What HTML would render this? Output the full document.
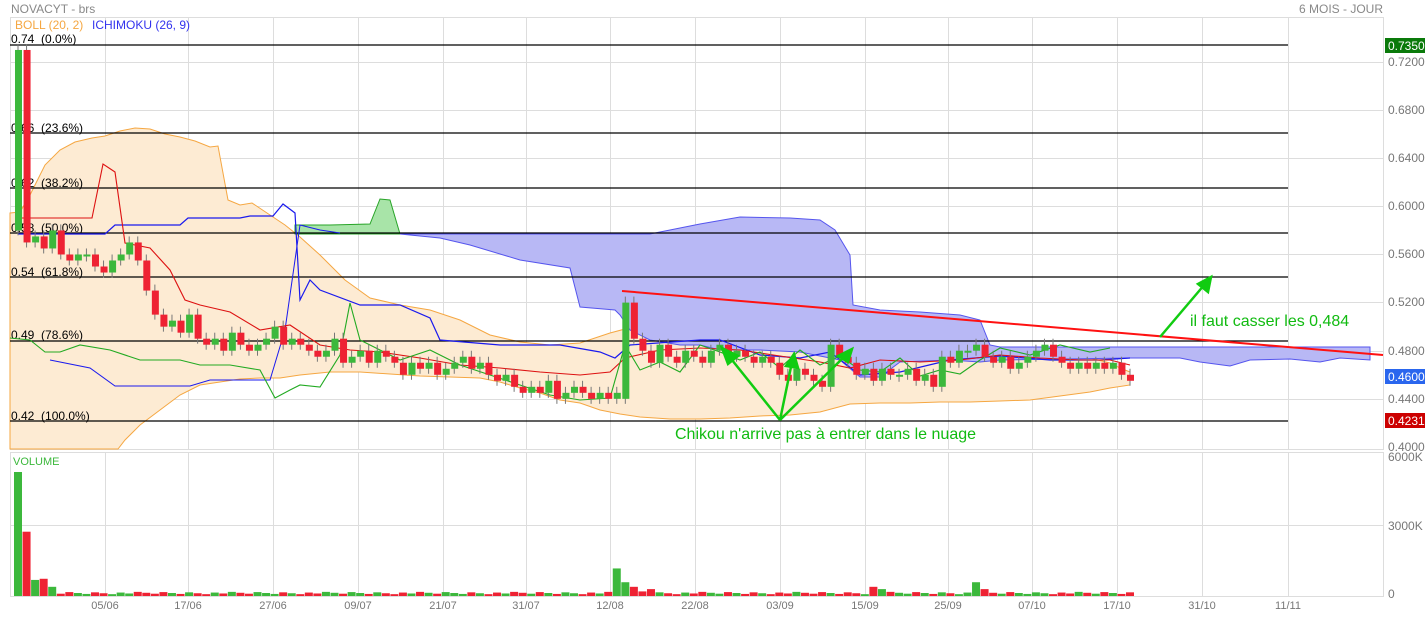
<!DOCTYPE html><html><head><meta charset="utf-8"><style>
body{margin:0;background:#fff;width:1428px;height:616px;overflow:hidden;font-family:"Liberation Sans",sans-serif}
svg text{font-family:"Liberation Sans",sans-serif;white-space:pre}
</style></head><body>
<svg id="s" width="1428" height="616" xmlns="http://www.w3.org/2000/svg">
<rect width="1428" height="616" fill="#fff"/>
<g id="grid" stroke="#ddd" stroke-width="1"></g>
<rect x="10.5" y="17.5" width="1373" height="432" fill="none" stroke="#ddd"/>
<rect x="10.5" y="452.5" width="1373" height="144" fill="none" stroke="#ddd"/>
<polygon fill="#fdebd3" stroke="#f5a742" stroke-width="1" points="10,213 20,212 30,195 45,165 60,150 75,142 92,138 105,136 120,131 135,128 150,129 165,134 180,137 195,141 210,147 218,146 228,200 240,205 252,203 270,215 285,225 300,237 320,255 345,280 370,298 400,305 430,310 460,320 490,335 520,342 550,345 580,343 610,333 640,325 670,322 700,320 740,320 780,321 820,322 850,326 880,330 910,340 940,342 970,346 1000,348 1030,352 1060,355 1090,358 1110,363 1120,368 1130,372 1130,385 1110,388 1090,392 1060,396 1030,400 1000,401 970,402 940,402 910,403 880,403 850,404 820,412 790,415 760,416 730,418 700,419 670,419 640,417 620,414 600,410 580,403 560,400 540,393 520,388 500,382 480,378 450,377 420,376 390,374 360,372 330,372 300,375 280,378 260,378 240,379 220,382 200,385 180,395 160,410 140,425 125,440 118,449 10,449"/>
<polygon fill="#a8e4a8" stroke="#28a428" points="295,225 330,225 370,224 380,199 390,200 400,234 295,234"/>
<polygon fill="#b8b8f5" stroke="#5555ee" stroke-width="1" points="400,234 650,234 700,224 740,217 790,218 820,220 835,230 850,255 853,305 880,310 920,312 960,315 980,320 990,345 1000,347 1120,347 1370,347 1370,360 1340,358 1320,362 1290,359 1250,360 1230,366 1200,362 1180,358 1130,358 1000,360 980,362 950,360 900,362 880,377 860,377 840,360 800,352 760,350 720,350 700,345 680,345 650,340 630,330 620,315 615,310 580,307 570,268 520,260 470,245 440,238 420,236 400,234"/>
<g stroke="#000" stroke-width="1.2">
<line x1="10" y1="45" x2="1288" y2="45"/><line x1="10" y1="133" x2="1288" y2="133"/><line x1="10" y1="188" x2="1288" y2="188"/><line x1="10" y1="233" x2="1288" y2="233"/><line x1="10" y1="277" x2="1288" y2="277"/><line x1="10" y1="341" x2="1288" y2="341"/><line x1="10" y1="421" x2="1288" y2="421"/>
</g>
<g font-size="12" fill="#000">
<text x="11" y="43">0.74  (0.0%)</text><text x="11" y="132">0.66  (23.6%)</text><text x="11" y="187">0.62  (38.2%)</text><text x="11" y="232">0.58  (50.0%)</text><text x="11" y="276">0.54  (61.8%)</text><text x="11" y="339">0.49  (78.6%)</text><text x="11" y="420">0.42  (100.0%)</text>
</g>
<polyline fill="none" stroke="#1a1aee" stroke-width="1.2" points="18,234 105,234 115,225 180,225 188,218 240,218 250,216 273,216 283,204 295,213 300,300 310,280 320,290 360,305 400,305 430,318 440,340 500,345 560,345 600,352 615,358 630,345 700,340 720,340 760,355 800,358 830,352 860,375 900,372 950,360 1000,356 1050,360 1100,360 1130,358"/>
<polyline fill="none" stroke="#1a1aee" stroke-width="1" points="50,360 90,368 115,386 190,386 210,380 270,380 285,330 300,225 320,230 340,233"/>
<polyline fill="none" stroke="#dd1111" stroke-width="1.1" points="18,218 92,218 103,164 115,172 125,243 135,245 150,248 170,270 185,300 200,305 230,312 260,330 290,325 320,345 350,350 380,352 420,358 460,365 500,368 540,372 580,375 610,372 625,358 660,350 700,348 740,350 780,356 820,362 850,368 880,360 920,362 960,360 1000,355 1040,358 1080,360 1110,360 1130,365"/>
<polyline fill="none" stroke="#22aa22" stroke-width="1.1" points="10,338 30,340 45,352 60,352 80,345 110,350 140,360 180,360 200,365 230,365 260,370 275,398 290,390 300,385 320,387 340,355 350,303 360,340 380,350 400,360 430,350 460,365 490,375 520,385 550,395 580,400 610,398 625,345 640,370 660,362 680,372 700,345 720,352 740,360 760,352 780,368 800,350 820,365 840,356 860,370 880,372 900,358 920,376 940,370 960,374 980,360 1000,348 1030,355 1060,345 1090,352 1110,348"/>
<g id="candles"></g>
<line x1="622" y1="291" x2="1383" y2="355" stroke="#ff1111" stroke-width="2"/>
<g stroke="#11cc11" stroke-width="2.5" fill="#11cc11">
<line x1="780" y1="420" x2="728" y2="355"/><polygon points="722,348 738,356 728,364"/>
<line x1="780" y1="420" x2="792" y2="362"/><polygon points="794,354 798,368 786,366"/>
<line x1="780" y1="420" x2="846" y2="355"/><polygon points="852,349 848,362 838,356"/>
<line x1="1160" y1="337" x2="1205" y2="284"/><polygon points="1211,277 1208,292 1198,284"/>
</g>
<text x="675" y="439" font-size="16" fill="#11bb11">Chikou n'arrive pas à entrer dans le nuage</text>
<text x="1190" y="326" font-size="16" fill="#11bb11">il faut casser les 0,484</text>
<text x="11" y="13" font-size="12" fill="#888">NOVACYT - brs</text>
<text x="1383" y="13" font-size="12" fill="#888" text-anchor="end">6 MOIS - JOUR</text>
<text x="15" y="29" font-size="12" fill="#f5a742">BOLL (20, 2)</text>
<text x="92" y="29" font-size="12" fill="#3333ee">ICHIMOKU (26, 9)</text>
<g font-size="12" fill="#777">
<text x="1388" y="66">0.7200</text><text x="1388" y="114">0.6800</text><text x="1388" y="162">0.6400</text><text x="1388" y="210">0.6000</text><text x="1388" y="258">0.5600</text><text x="1388" y="306">0.5200</text><text x="1388" y="355">0.4800</text><text x="1388" y="403">0.4400</text><text x="1388" y="451">0.4000</text>
</g>
<rect x="1385" y="38" width="40" height="15" fill="#0a7a0a"/><text x="1388" y="50" font-size="12" fill="#fff">0.7350</text>
<rect x="1385" y="369" width="40" height="15" fill="#2a66ee"/><text x="1388" y="381" font-size="12" fill="#fff">0.4600</text>
<rect x="1385" y="413" width="40" height="15" fill="#c00"/><text x="1388" y="425" font-size="12" fill="#fff">0.4231</text>
<text x="13" y="465" font-size="11" fill="#3cb83c">VOLUME</text>
<g font-size="12" fill="#777"><text x="1388" y="461">6000K</text><text x="1388" y="530">3000K</text><text x="1388" y="598">0</text></g>
<g id="vol"></g>
<g font-size="11" fill="#777" id="dates"></g>
</svg>
<script>
var ns="http://www.w3.org/2000/svg";
function el(p,t,a,txt){var e=document.createElementNS(ns,t);for(var k in a)e.setAttribute(k,a[k]);if(txt)e.textContent=txt;document.getElementById(p).appendChild(e);return e;}
var gx=[105,188,273,358,443,526,610,695,780,865,948,1032,1117,1202,1288];
var dl=["05/06","17/06","27/06","09/07","21/07","31/07","12/08","22/08","03/09","15/09","25/09","07/10","17/10","31/10","11/11"];
var gy=[62,110,158,206,254,302,351,399];
gx.forEach(function(x,i){el("grid","line",{x1:x+.5,y1:18,x2:x+.5,y2:449});el("grid","line",{x1:x+.5,y1:453,x2:x+.5,y2:596});el("dates","text",{x:x,y:609,"text-anchor":"middle"},dl[i]);});
gy.forEach(function(y){el("grid","line",{x1:10,y1:y+.5,x2:1383,y2:y+.5});});
el("grid","line",{x1:10,y1:525.5,x2:1383,y2:525.5});
function Y(p){return 62+(0.72-p)*1203;}
var closes=[0.73,0.57,0.575,0.565,0.58,0.56,0.555,0.56,0.56,0.55,0.545,0.555,0.56,0.57,0.555,0.53,0.51,0.5,0.505,0.495,0.51,0.49,0.485,0.49,0.48,0.495,0.485,0.48,0.485,0.49,0.5,0.485,0.49,0.485,0.48,0.475,0.48,0.49,0.47,0.475,0.48,0.47,0.48,0.475,0.47,0.46,0.47,0.465,0.47,0.46,0.465,0.47,0.475,0.465,0.47,0.46,0.455,0.46,0.45,0.445,0.45,0.445,0.455,0.44,0.445,0.45,0.445,0.44,0.445,0.44,0.445,0.52,0.49,0.48,0.47,0.485,0.475,0.47,0.48,0.475,0.47,0.48,0.485,0.475,0.48,0.475,0.47,0.475,0.47,0.46,0.455,0.465,0.46,0.455,0.45,0.485,0.475,0.47,0.46,0.465,0.455,0.465,0.46,0.46,0.465,0.455,0.46,0.45,0.475,0.47,0.48,0.48,0.485,0.475,0.47,0.475,0.465,0.47,0.475,0.48,0.485,0.475,0.47,0.465,0.47,0.465,0.47,0.465,0.47,0.46,0.455];
var vols={0:540,1:280,2:70,3:75,4:40,70:120,71:60,72:40,73:20,74:30,100:40,101:30,112:60,113:30};
var n=closes.length,x0=18,dx=(1130-18)/(n-1);
for(var i=0;i<n;i++){
 var c=closes[i],o=i==0?0.58:closes[i-1];
 if(i==1)o=0.73;
 if(i==71){o=0.44;c=0.52;}
 var up=c>=o,col=up?"#3cb83c":"#ee2233";
 var x=x0+i*dx,y1=Y(Math.max(o,c)),y2=Y(Math.min(o,c));if(y2-y1<2)y2=y1+2;
 el("candles","line",{x1:x,y1:y1-6,x2:x,y2:y2+5,stroke:"#777","stroke-width":1});
 el("candles","rect",{x:x-3,y:y1,width:7,height:y2-y1,fill:col});
 var v=vols[i]||(8+((i*7)%11));var vh=v*124/540;
 el("vol","rect",{x:x-4,y:596-vh,width:8,height:vh,fill:col});
}
</script>
</body></html>
